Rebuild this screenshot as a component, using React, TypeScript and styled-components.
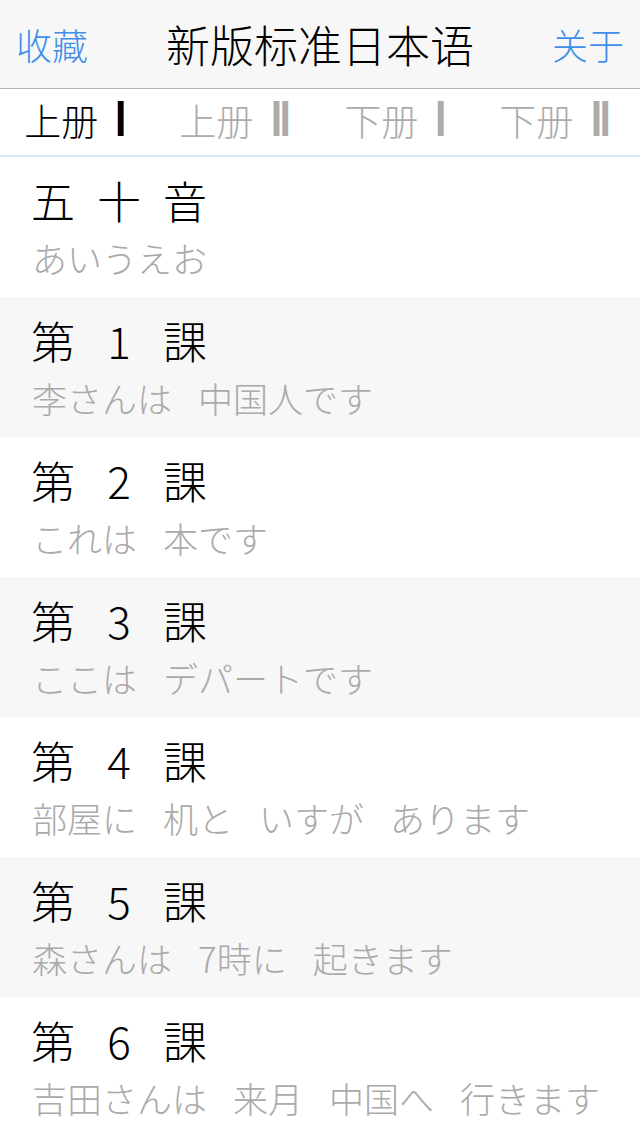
import React, { useState } from 'react';
import styled, { createGlobalStyle } from 'styled-components';

const GlobalStyle = createGlobalStyle`
  html, body {
    margin: 0;
    padding: 0;
    background: #ffffff;
  }
  body {
    font-family: "Noto Sans CJK JP", "Noto Sans CJK SC", sans-serif;
    font-weight: 300;
    -webkit-font-smoothing: antialiased;
  }
`;

const Page = styled.div`
  width: 640px;
  min-height: 1136px;
  background: #ffffff;
  overflow: hidden;
`;

const NavBar = styled.header`
  height: 88px;
  display: grid;
  grid-template-columns: 120px 1fr 120px;
  align-items: center;
  background: #f7f7f7;
  border-bottom: 1px solid #b4b4b4;
  font-family: "Noto Sans CJK SC", sans-serif;
`;

const NavButton = styled.button<{ $align: 'left' | 'right' }>`
  border: none;
  background: none;
  padding: 0 16px;
  font-family: inherit;
  font-weight: 300;
  font-size: 36px;
  line-height: 40px;
  color: #3f8fea;
  text-align: ${(p) => p.$align};
  cursor: pointer;
`;

const NavTitle = styled.h1`
  margin: 0;
  text-align: center;
  font-size: 44px;
  line-height: 48px;
  font-weight: 300;
  color: #000000;
`;

const Tabs = styled.nav`
  height: 66px;
  display: grid;
  grid-template-columns: repeat(4, 1fr);
  align-items: center;
  border-bottom: 2px solid #d7e7f6;
  font-family: "Noto Sans CJK SC", sans-serif;
`;

const Tab = styled.button<{ $active: boolean }>`
  border: none;
  background: none;
  padding: 0 8px 0 0;
  font-family: inherit;
  font-weight: 300;
  font-size: 37px;
  line-height: 40px;
  color: ${(p) => (p.$active ? '#000000' : '#acacac')};
  white-space: nowrap;
  cursor: pointer;
`;

const Numeral = styled.span`
  display: inline-block;
  margin-left: 16px;
  font-family: "DejaVu Sans", "Liberation Sans", sans-serif;
  font-weight: 700;
  font-size: 36px;
  transform: scale(0.85, 1.32);
  transform-origin: 50% 80%;
`;

const List = styled.ul`
  list-style: none;
  margin: 0;
  padding: 0;
`;

const Lesson = styled.li<{ $shaded: boolean }>`
  height: 140px;
  box-sizing: border-box;
  padding: 21px 0 0 31px;
  background: ${(p) => (p.$shaded ? '#f7f7f7' : '#ffffff')};
`;

const LessonTitle = styled.div`
  display: flex;
  gap: 22px;
  font-size: 44px;
  line-height: 44px;
  color: #000000;
`;

const TitleCell = styled.span`
  width: 44px;
  text-align: center;
`;

const LessonSub = styled.div`
  display: flex;
  gap: 26px;
  margin-top: 16px;
  padding-left: 1px;
  font-size: 35px;
  line-height: 40px;
  color: #aaaaaa;
  white-space: nowrap;
`;

const tabs = [
  { label: '上册', num: 'Ⅰ' },
  { label: '上册', num: 'Ⅱ' },
  { label: '下册', num: 'Ⅰ' },
  { label: '下册', num: 'Ⅱ' },
];

const lessons = [
  { title: ['五', '十', '音'], words: ['あいうえお'] },
  { title: ['第', '1', '課'], words: ['李さんは', '中国人です'] },
  { title: ['第', '2', '課'], words: ['これは', '本です'] },
  { title: ['第', '3', '課'], words: ['ここは', 'デパートです'] },
  { title: ['第', '4', '課'], words: ['部屋に', '机と', 'いすが', 'あります'] },
  { title: ['第', '5', '課'], words: ['森さんは', '7時に', '起きます'] },
  { title: ['第', '6', '課'], words: ['吉田さんは', '来月', '中国へ', '行きます'] },
];

const App = () => {
  const [tab, setTab] = useState(0);
  return (
    <Page>
      <GlobalStyle />
      <NavBar>
        <NavButton $align="left">收藏</NavButton>
        <NavTitle>新版标准日本语</NavTitle>
        <NavButton $align="right">关于</NavButton>
      </NavBar>
      <Tabs>
        {tabs.map((t, i) => (
          <Tab key={i} $active={tab === i} onClick={() => setTab(i)}>
            {t.label}
            <Numeral>{t.num}</Numeral>
          </Tab>
        ))}
      </Tabs>
      <List>
        {lessons.map((l, i) => (
          <Lesson key={i} $shaded={i % 2 === 1}>
            <LessonTitle>
              {l.title.map((c, j) => (
                <TitleCell key={j}>{c}</TitleCell>
              ))}
            </LessonTitle>
            <LessonSub>
              {l.words.map((w, j) => (
                <span key={j}>{w}</span>
              ))}
            </LessonSub>
          </Lesson>
        ))}
      </List>
    </Page>
  );
};

export default App;
